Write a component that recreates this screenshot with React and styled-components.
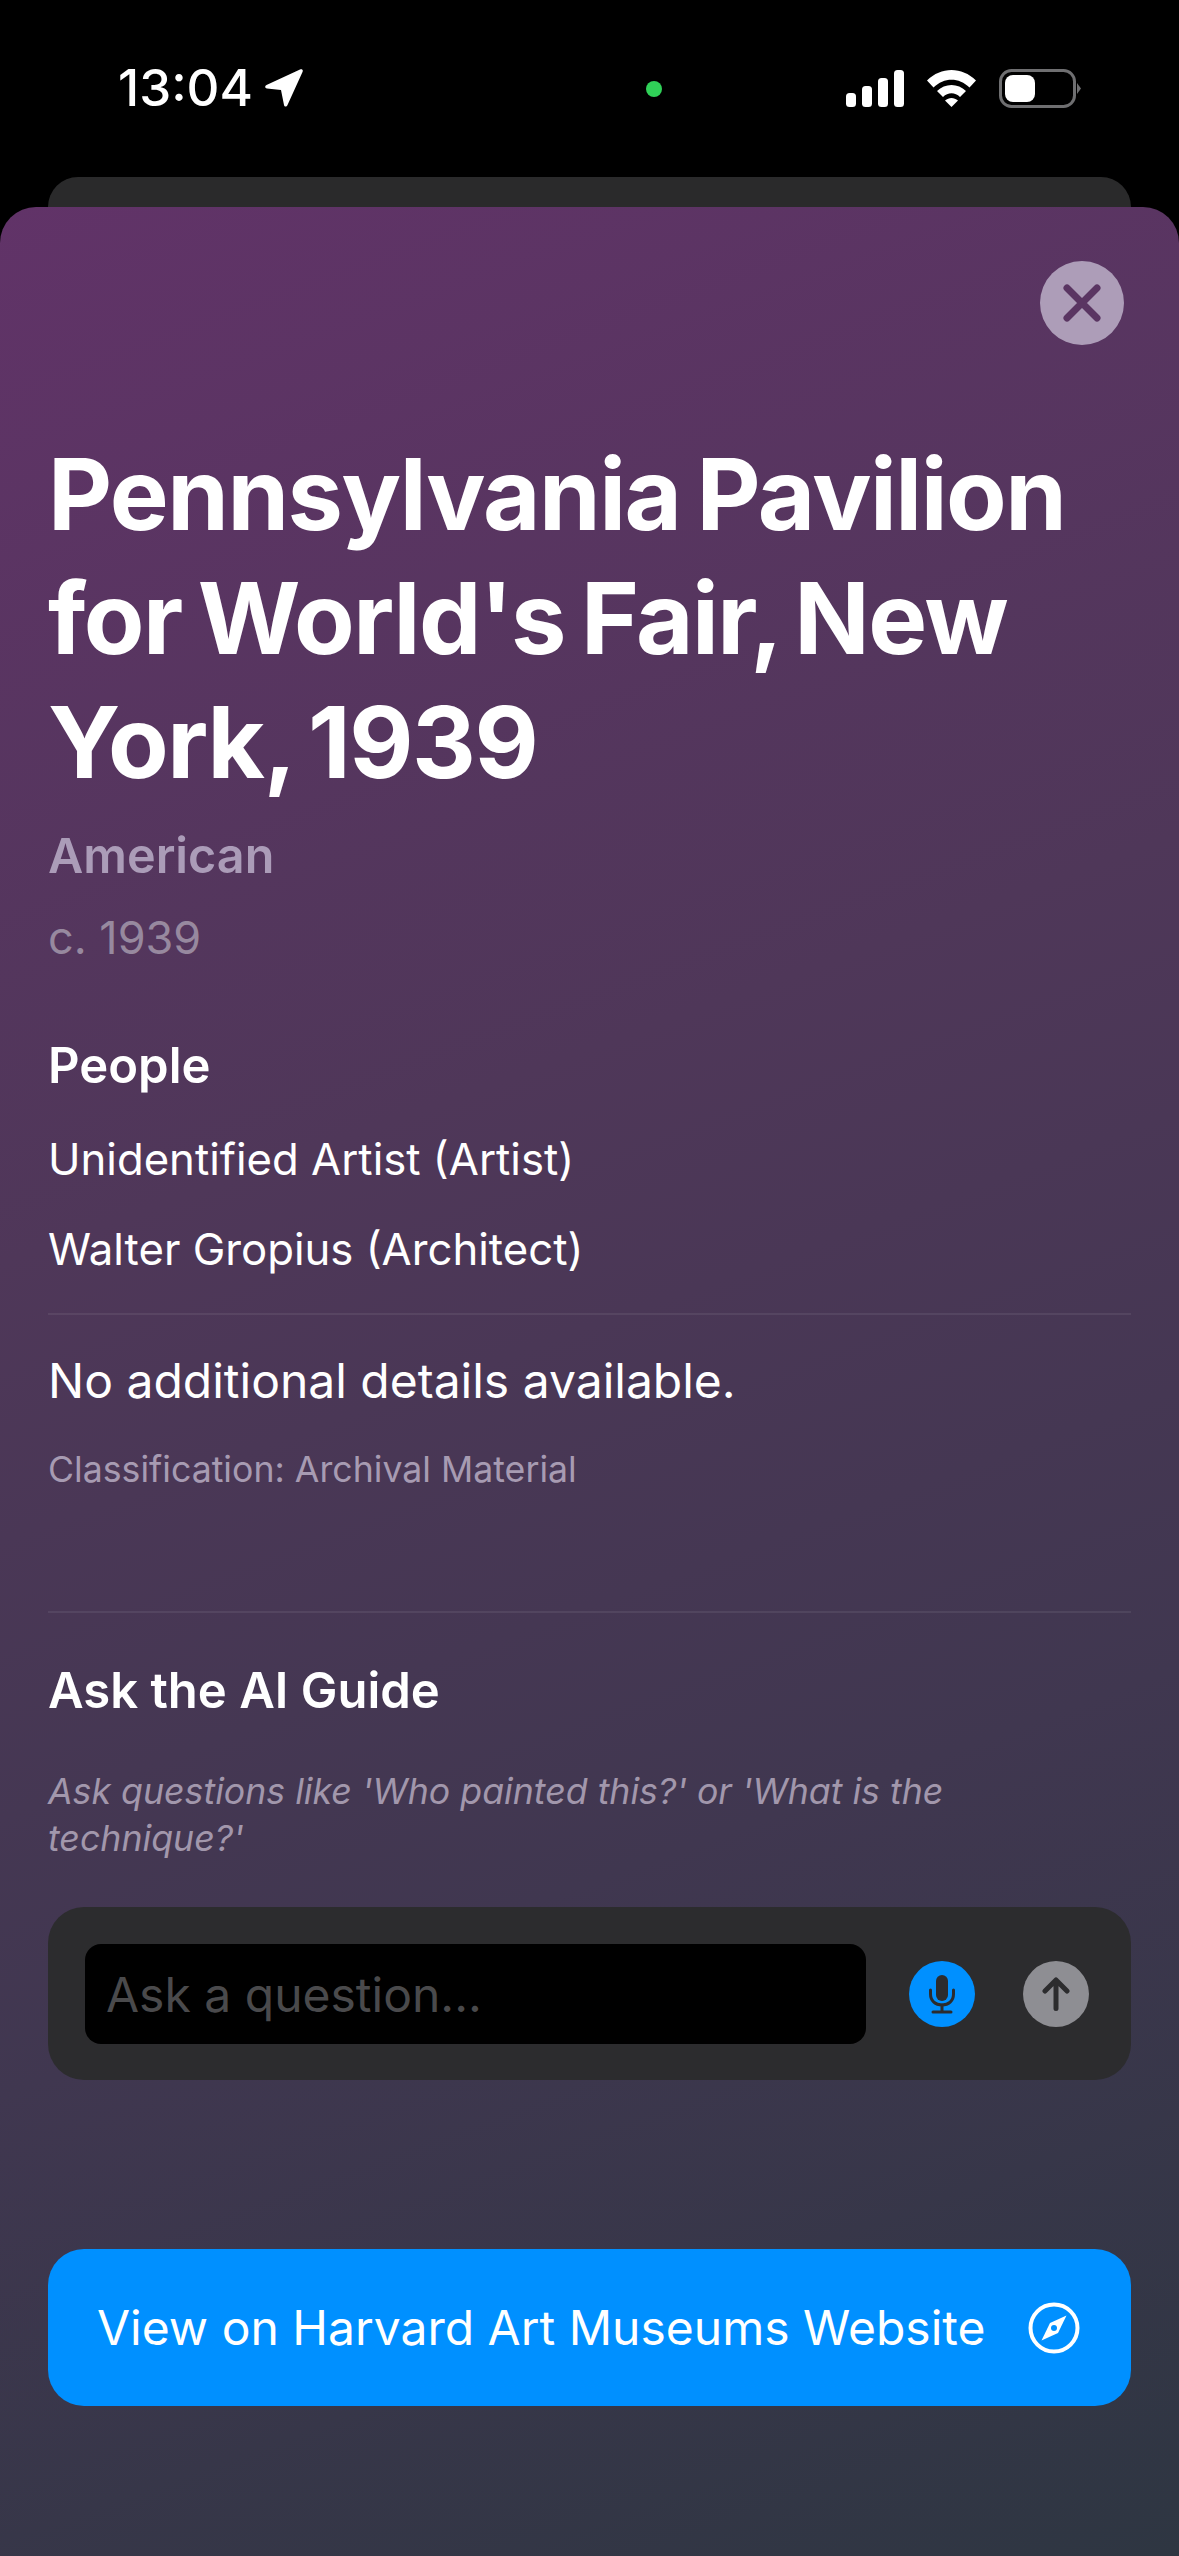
import React from "react"
import styled, { createGlobalStyle } from "styled-components"

const GlobalStyle = createGlobalStyle`
  html, body {
    margin: 0;
    padding: 0;
    background: #000;
  }
  * {
    box-sizing: border-box;
  }
  body {
    font-family: Inter, "Liberation Sans", sans-serif;
    color: #fff;
  }
`

const Screen = styled.div`
  width: 1179px;
  height: 2556px;
  background: #000;
  overflow: hidden;
  display: flex;
  flex-direction: column;
`

const StatusBar = styled.div`
  height: 177px;
  padding: 60px 98px 0 118px;
  display: flex;
  align-items: flex-start;
`

const Clock = styled.div`
  width: 300px;
  display: flex;
  align-items: center;
  gap: 12px;
  font-size: 51px;
  line-height: 56px;
  font-weight: 500;
`

const PrivacyDot = styled.div`
  width: 16px;
  height: 16px;
  margin: 21px 0 0 228px;
  border-radius: 50%;
  background: #30d158;
`

const StatusIcons = styled.div`
  margin-left: auto;
  display: flex;
  align-items: center;
  gap: 23px;
  height: 56px;
`

const BackCard = styled.div`
  height: 30px;
  margin: 0 48px;
  background: #2a2a2b;
  border-radius: 30px 30px 0 0;
`

const Sheet = styled.div`
  flex: 1;
  padding: 54px 48px 0;
  border-radius: 36px 36px 0 0;
  background: linear-gradient(160deg, #613368 0%, #4f3759 38%, #403750 68%, #2e3642 100%);
  display: flex;
  flex-direction: column;
`

const CloseRow = styled.div`
  display: flex;
  justify-content: flex-end;
  padding-right: 7px;
`

const CloseButton = styled.button`
  width: 84px;
  height: 84px;
  padding: 0;
  border: 0;
  border-radius: 50%;
  background: #ad9db8;
  display: flex;
  align-items: center;
  justify-content: center;
`

const Title = styled.h1`
  margin: 87px 0 0;
  font-size: 99px;
  line-height: 124px;
  font-weight: 700;
  letter-spacing: -1.5px;
  word-spacing: -6px;
`

const Origin = styled.div`
  margin-top: 22px;
  font-size: 48.5px;
  line-height: 60px;
  font-weight: 600;
  color: #ab9cb8;
`

const Dated = styled.div`
  margin-top: 22px;
  font-size: 45px;
  line-height: 60px;
  color: #97899f;
`

const SectionTitle = styled.h2`
  margin: ${(p) => p.$top}px 0 0;
  font-size: 49px;
  line-height: 60px;
  font-weight: 600;
`

const Person = styled.div`
  margin-top: ${(p) => p.$top}px;
  font-size: 43.7px;
  line-height: 54px;
  font-weight: 400;
`

const Divider = styled.div`
  height: 2px;
  margin-top: ${(p) => p.$top}px;
  background: rgba(255, 255, 255, 0.07);
`

const Details = styled.p`
  margin: 35px 0 0;
  font-size: 48px;
  line-height: 62px;
  font-weight: 400;
`

const Classification = styled.div`
  margin-top: 35px;
  font-size: 35.7px;
  line-height: 44px;
  color: #a79bb2;
`

const Hint = styled.p`
  margin: 47px 0 0;
  font-size: 35.7px;
  line-height: 47px;
  font-style: italic;
  color: #a297ac;
`

const AskCard = styled.div`
  height: 173px;
  margin-top: 45px;
  padding: 37px 42px 0 37px;
  background: #2c2c2e;
  border-radius: 36px;
  display: flex;
  align-items: flex-start;
`

const QuestionInput = styled.div`
  width: 781px;
  height: 100px;
  padding-left: 21px;
  background: #000;
  border-radius: 16px;
  display: flex;
  align-items: center;
  font-size: 48px;
  color: #4a4a4c;
`

const RoundButton = styled.button`
  width: 66px;
  height: 66px;
  padding: 0;
  margin: 17px 0 0 ${(p) => p.$left}px;
  border: 0;
  border-radius: 50%;
  background: ${(p) => p.$color};
  display: flex;
  align-items: center;
  justify-content: center;
`

const WebsiteButton = styled.button`
  height: 157px;
  margin-top: 169px;
  padding: 0 51px 0 49px;
  border: 0;
  border-radius: 36px;
  background: #0090ff;
  color: #fff;
  font-family: inherit;
  font-size: 48px;
  display: flex;
  align-items: center;
  justify-content: space-between;
`

const Signal = () => (
  <svg width="58" height="37" viewBox="0 0 58 37" fill="#fff">
    <rect x="0" y="23" width="10" height="14" rx="3.5" />
    <rect x="16" y="16" width="10" height="21" rx="3.5" />
    <rect x="32" y="8" width="10" height="29" rx="3.5" />
    <rect x="48" y="0" width="10" height="37" rx="3.5" />
  </svg>
)

const Wifi = () => (
  <svg width="49" height="37" viewBox="0 0 49 37" fill="#fff">
    <path d="M0 10.500C14-3.500 35-3.500 49 10.500L42.500 17.500C32 7 17 7 6.500 17.500Z" />
    <path d="M10 21C18 13 31 13 39 21L33 27C28 22 21 22 16 27Z" />
    <path d="M18 30.500C22 27 27 27 31 30.500L24.500 37Z" />
  </svg>
)

const Battery = () => (
  <svg width="82" height="39" viewBox="0 0 82 39">
    <rect x="1.5" y="1.500" width="74" height="36" rx="11" fill="none" stroke="#6f6f71" strokeWidth="3" />
    <rect x="6" y="6" width="30" height="27" rx="8" fill="#fff" />
    <path d="M78 14l4 5.500-4 5.500z" fill="#6f6f71" />
  </svg>
)

const Location = () => (
  <svg width="38" height="38" viewBox="0 0 38 38" fill="#fff">
    <path d="M35 .5L1.500 16C-.5 17 0 19.500 2 19.500L16 21l3 15c.5 2 2.500 2 3.500 0l15-33c1-2-.5-3.500-2.500-2.500z" />
  </svg>
)

const CloseIcon = () => (
  <svg width="40" height="40" viewBox="0 0 40 40" stroke="#5a3562" strokeWidth="7" strokeLinecap="round">
    <path d="M5 5l30 30M35 5L5 35" />
  </svg>
)

const MicIcon = () => (
  <svg width="26" height="39" viewBox="0 0 26 39" fill="none" stroke="#2c2c2e" strokeWidth="3" strokeLinecap="round">
    <rect x="7" y="0" width="12" height="26" rx="6" fill="#2c2c2e" stroke="none" />
    <path d="M1.500 15v4c0 7 5 11 11.500 11s11.500-4 11.500-11v-4" />
    <path d="M13 30v6M4 37h18" />
  </svg>
)

const UpIcon = () => (
  <svg width="28" height="34" viewBox="0 0 28 34" fill="none" stroke="#2c2c2e" strokeWidth="5" strokeLinecap="round" strokeLinejoin="round">
    <path d="M14 31.500V3M3 14L14 3l11 11" />
  </svg>
)

const CompassIcon = () => (
  <svg width="52" height="52" viewBox="0 0 52 52" fill="none">
    <circle cx="26" cy="26" r="23.500" stroke="#fff" strokeWidth="4" />
    <path d="M38.500 13.500L22 21l-8.500 17.500L30 31z" fill="#fff" />
    <circle cx="26" cy="26" r="3" fill="#0090ff" />
  </svg>
)

export default function App() {
  return (
    <Screen>
      <GlobalStyle />
      <StatusBar>
        <Clock>
          13:04
          <Location />
        </Clock>
        <PrivacyDot />
        <StatusIcons>
          <Signal />
          <Wifi />
          <Battery />
        </StatusIcons>
      </StatusBar>
      <BackCard />
      <Sheet>
        <CloseRow>
          <CloseButton aria-label="Close">
            <CloseIcon />
          </CloseButton>
        </CloseRow>
        <Title>Pennsylvania Pavilion for World's Fair, New York, 1939</Title>
        <Origin>American</Origin>
        <Dated>c. 1939</Dated>
        <SectionTitle $top={68}>People</SectionTitle>
        <Person $top={37}>Unidentified Artist (Artist)</Person>
        <Person $top={36}>Walter Gropius (Architect)</Person>
        <Divider $top={36} />
        <Details>No additional details available.</Details>
        <Classification>Classification: Archival Material</Classification>
        <Divider $top={120} />
        <SectionTitle $top={48}>Ask the AI Guide</SectionTitle>
        <Hint>Ask questions like 'Who painted this?' or 'What is the technique?'</Hint>
        <AskCard>
          <QuestionInput>Ask a question...</QuestionInput>
          <RoundButton $left={43} $color="#0090ff" aria-label="Voice">
            <MicIcon />
          </RoundButton>
          <RoundButton $left={48} $color="#8e8e93" aria-label="Send">
            <UpIcon />
          </RoundButton>
        </AskCard>
        <WebsiteButton>
          View on Harvard Art Museums Website
          <CompassIcon />
        </WebsiteButton>
      </Sheet>
    </Screen>
  )
}
